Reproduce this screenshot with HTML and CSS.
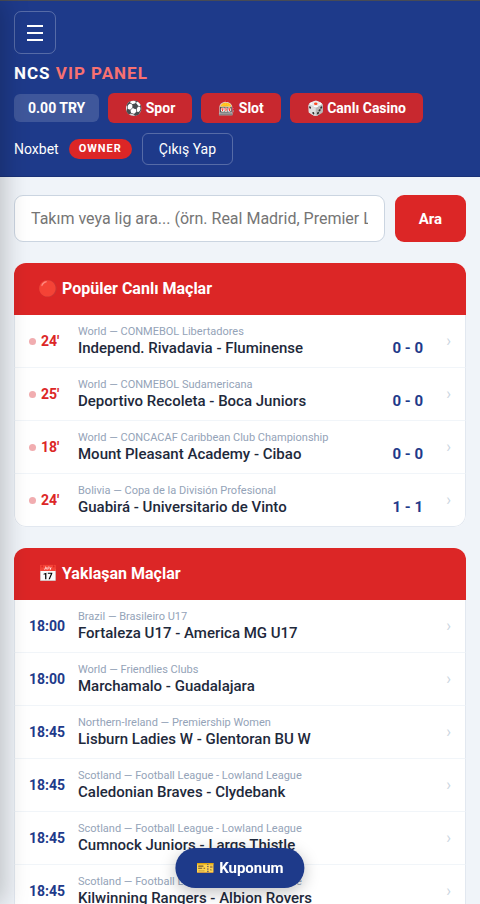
FILE: index.html
```html
<!DOCTYPE html>
<html lang="tr">
<head>
<meta charset="utf-8">
<meta name="viewport" content="width=device-width, initial-scale=1">
<title>NCS VIP PANEL</title>
<link rel="stylesheet" href="styles.css">
</head>
<body>
<aside class="drawer" aria-hidden="true"></aside>
<header class="topbar">
  <button class="menu-btn" type="button" aria-label="Menü">
    <svg viewBox="0 0 16 16" width="16" height="16"><path d="M0 1h16M0 8h16M0 15h16" stroke="currentColor" stroke-width="2"/></svg>
  </button>
  <h1 class="brand">NCS <span>VIP PANEL</span></h1>
  <nav class="topbar-row">
    <span class="balance">0.00 TRY</span>
    <a class="nav-btn" href="#spor">⚽ Spor</a>
    <a class="nav-btn" href="#slot">🎰 Slot</a>
    <a class="nav-btn" href="#casino">🎲 Canlı Casino</a>
  </nav>
  <div class="topbar-row user-row">
    <span class="user">Noxbet</span>
    <span class="role">OWNER</span>
    <button class="logout" type="button">Çıkış Yap</button>
  </div>
</header>
<main class="content">
  <form class="search">
    <input type="text" aria-label="Takım veya lig ara" placeholder="Takım veya lig ara... (örn. Real Madrid, Premier League)">
    <button type="button">Ara</button>
  </form>
  <section class="card">
    <h2 class="card-head">🔴 Popüler Canlı Maçlar</h2>
    <a class="match" href="#m1"><span class="time live">24'</span><span class="info"><span class="league">World — CONMEBOL Libertadores</span><span class="teams">Independ. Rivadavia - Fluminense</span></span><span class="score">0 - 0</span><span class="chevron">›</span></a>
    <a class="match" href="#m2"><span class="time live">25'</span><span class="info"><span class="league">World — CONMEBOL Sudamericana</span><span class="teams">Deportivo Recoleta - Boca Juniors</span></span><span class="score">0 - 0</span><span class="chevron">›</span></a>
    <a class="match" href="#m3"><span class="time live">18'</span><span class="info"><span class="league">World — CONCACAF Caribbean Club Championship</span><span class="teams">Mount Pleasant Academy - Cibao</span></span><span class="score">0 - 0</span><span class="chevron">›</span></a>
    <a class="match" href="#m4"><span class="time live">24'</span><span class="info"><span class="league">Bolivia — Copa de la División Profesional</span><span class="teams">Guabirá - Universitario de Vinto</span></span><span class="score">1 - 1</span><span class="chevron">›</span></a>
  </section>
  <section class="card">
    <h2 class="card-head">📅 Yaklaşan Maçlar</h2>
    <a class="match" href="#u1"><span class="time">18:00</span><span class="info"><span class="league">Brazil — Brasileiro U17</span><span class="teams">Fortaleza U17 - America MG U17</span></span><span class="chevron">›</span></a>
    <a class="match" href="#u2"><span class="time">18:00</span><span class="info"><span class="league">World — Friendlies Clubs</span><span class="teams">Marchamalo - Guadalajara</span></span><span class="chevron">›</span></a>
    <a class="match" href="#u3"><span class="time">18:45</span><span class="info"><span class="league">Northern-Ireland — Premiership Women</span><span class="teams">Lisburn Ladies W - Glentoran BU W</span></span><span class="chevron">›</span></a>
    <a class="match" href="#u4"><span class="time">18:45</span><span class="info"><span class="league">Scotland — Football League - Lowland League</span><span class="teams">Caledonian Braves - Clydebank</span></span><span class="chevron">›</span></a>
    <a class="match" href="#u5"><span class="time">18:45</span><span class="info"><span class="league">Scotland — Football League - Lowland League</span><span class="teams">Cumnock Juniors - Largs Thistle</span></span><span class="chevron">›</span></a>
    <a class="match" href="#u6"><span class="time">18:45</span><span class="info"><span class="league">Scotland — Football League - Lowland League</span><span class="teams">Kilwinning Rangers - Albion Rovers</span></span><span class="chevron">›</span></a>
  </section>
</main>
<button class="coupon" type="button">🎫 Kuponum</button>
</body>
</html>
```
FILE: styles.css
```css
* { box-sizing: border-box; }
body {
  margin: 0;
  background: #f0f4f9;
  color: #1e293b;
  font-family: Roboto, "Liberation Sans", sans-serif;
  font-size: 14px;
}
button, input { font: inherit; }
a { color: inherit; text-decoration: none; }
.drawer {
  position: fixed;
  top: 0;
  bottom: 0;
  left: -240px;
  width: 240px;
  z-index: 5;
  box-shadow: 4px 0 24px rgba(0, 0, 0, 0.22);
}
.topbar {
  display: flex;
  flex-direction: column;
  align-items: flex-start;
  gap: 10px;
  padding: 10px 14px 11px;
  background: #1e3a8a;
  border-top: 1px solid #484b55;
  border-bottom: 1px solid #1a3278;
  color: #fff;
}
.menu-btn {
  display: flex;
  align-items: center;
  justify-content: center;
  width: 42px;
  height: 43px;
  padding: 0;
  border: 1px solid rgba(255, 255, 255, 0.25);
  border-radius: 7px;
  background: transparent;
  color: #fff;
}
.brand {
  margin: 0;
  font-size: 17px;
  line-height: 19px;
  font-weight: 700;
  letter-spacing: 1px;
}
.brand span { color: #f87171; }
.topbar-row {
  display: flex;
  flex-wrap: wrap;
  align-items: center;
  gap: 9px;
}
.user-row { gap: 10px; }
.balance, .nav-btn {
  font-size: 14px;
  line-height: 16px;
  font-weight: 700;
  border-radius: 6px;
}
.balance {
  padding: 6px 14px;
  background: rgba(255, 255, 255, 0.15);
}
.nav-btn {
  padding: 7px 17px;
  background: #c8282f;
}
.role {
  padding: 3px 10px;
  border-radius: 12px;
  background: #dc2626;
  font-size: 11px;
  line-height: 14px;
  font-weight: 700;
  letter-spacing: 1px;
}
.logout {
  padding: 6px 16px;
  border: 1px solid rgba(255, 255, 255, 0.25);
  border-radius: 6px;
  background: transparent;
  color: #fff;
  line-height: 18px;
}
.content {
  display: flex;
  flex-direction: column;
  gap: 21px;
  padding: 18px 14px;
}
.search { display: flex; gap: 10px; }
.search input {
  flex: 1;
  min-width: 0;
  height: 47px;
  padding: 0 16px;
  border: 1px solid #cbd5e1;
  border-radius: 9px;
  background: #fff;
  font-size: 16px;
}
.search input::placeholder { color: #757575; }
.search button {
  padding: 0 24px;
  border: 0;
  border-radius: 9px;
  background: #dc2626;
  color: #fff;
  font-size: 15px;
  font-weight: 700;
}
.card {
  overflow: hidden;
  border-radius: 12px;
  background: #fff;
}
.card-head {
  margin: 0;
  padding: 16px 24px;
  background: #dc2626;
  color: #fff;
  font-size: 16px;
  line-height: 20px;
  font-weight: 700;
}
.match {
  display: flex;
  align-items: center;
  padding: 9px 14px;
  border: solid #e2e8f0;
  border-width: 0 1px 1px;
  border-bottom-color: #f1f5f9;
}
.match:last-child {
  border-bottom-color: #e2e8f0;
  border-radius: 0 0 12px 12px;
}
.time {
  width: 49px;
  color: #1e3a8a;
  font-size: 14px;
  line-height: 18px;
  font-weight: 700;
}
.live {
  display: flex;
  align-items: center;
  gap: 5px;
  color: #dc2626;
}
.live::before {
  content: "";
  width: 7px;
  height: 7px;
  border-radius: 50%;
  background: #f1adb0;
}
.info { flex: 1; min-width: 0; padding-bottom: 1px; }
.league, .teams { display: block; white-space: nowrap; }
.league {
  color: #94a3b8;
  font-size: 11px;
  line-height: 16px;
}
.teams {
  font-size: 15px;
  line-height: 17px;
  font-weight: 500;
}
.score {
  align-self: flex-end;
  width: 48px;
  padding-bottom: 1px;
  color: #1e3a8a;
  font-size: 15px;
  line-height: 17px;
  font-weight: 700;
  text-align: right;
}
.chevron {
  width: 28px;
  color: #cbd5e1;
  font-size: 16px;
  line-height: 20px;
  text-align: right;
}
.coupon {
  position: fixed;
  z-index: 10;
  bottom: 16px;
  left: 50%;
  transform: translateX(-50%);
  padding: 10px 21px;
  border: 0;
  border-radius: 21px;
  background: #1e3a8a;
  color: #fff;
  font-size: 15px;
  line-height: 20px;
  font-weight: 700;
  white-space: nowrap;
  box-shadow: 0 4px 16px rgba(0, 0, 0, 0.25);
}
```
